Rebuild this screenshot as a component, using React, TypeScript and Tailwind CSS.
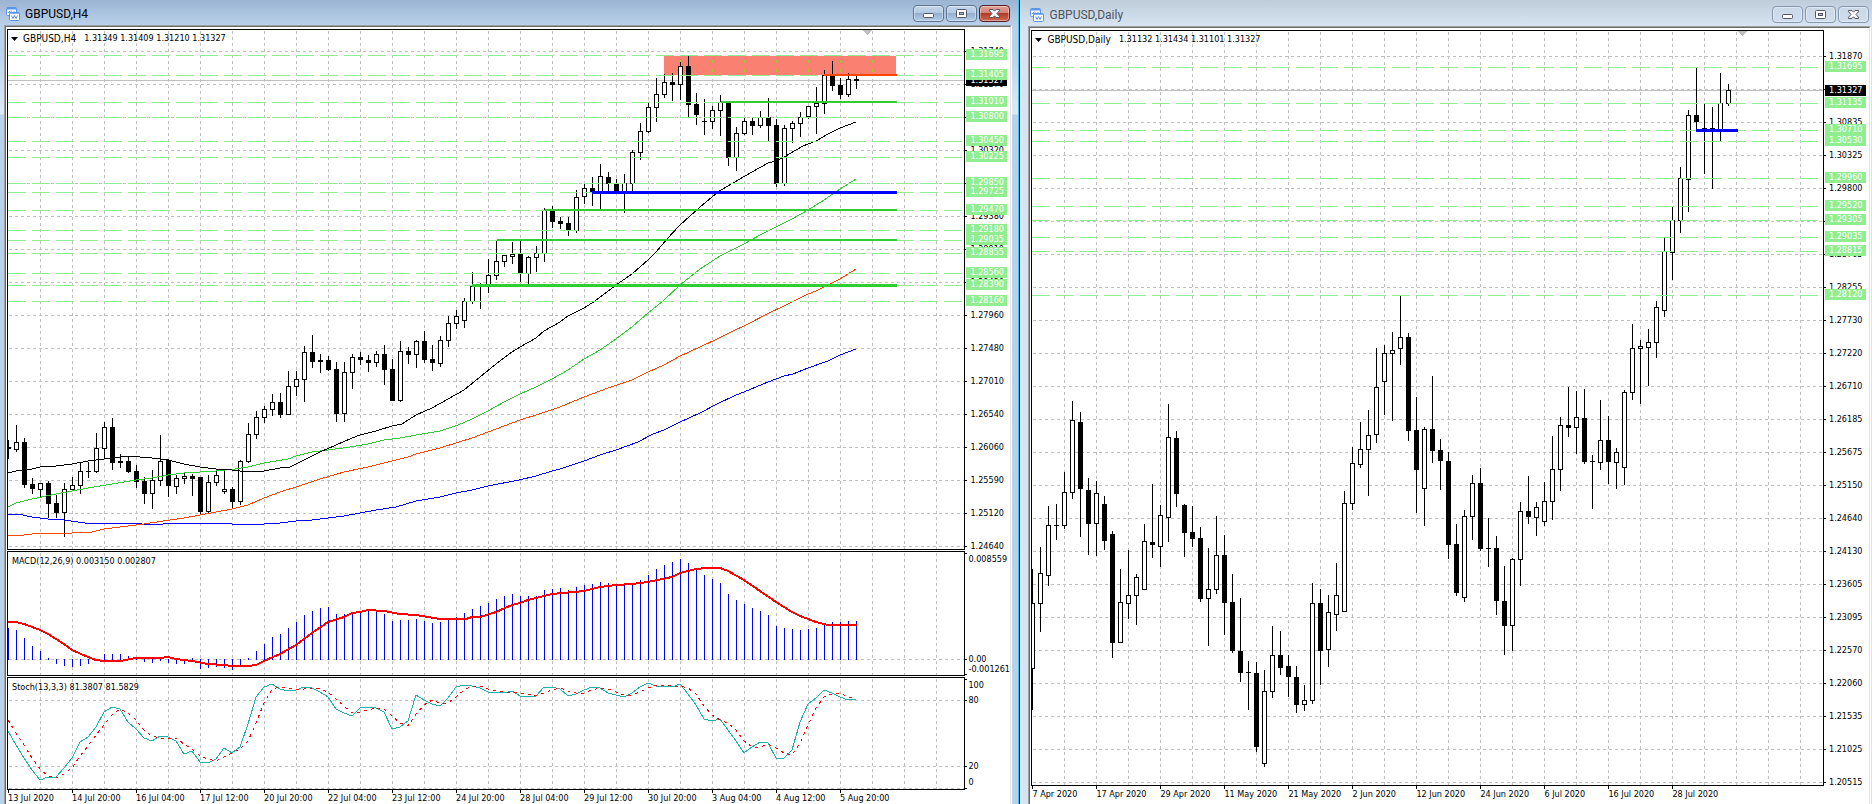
import type { ReactNode } from 'react';

// [high, body top, body bottom, low, 1 = bearish (filled)]
type Candle = [number, number, number, number, number];
type Level = { label: string; y: number };
type Origin = { x: number; y: number };

const H4: Candle[] = [
	[440, 447, 449, 459, 1], [425, 442, 450, 452, 0], [438, 442, 485, 488, 1], [478, 484, 489, 494, 1],
	[483, 483, 490, 497, 0], [481, 483, 504, 518, 1], [495, 503, 513, 518, 1], [483, 489, 513, 537, 0],
	[477, 485, 490, 491, 0], [462, 471, 486, 494, 0], [462, 471, 472, 478, 1], [433, 448, 472, 473, 0],
	[422, 427, 449, 459, 0], [418, 427, 463, 470, 1], [454, 461, 463, 468, 1], [456, 461, 472, 473, 1],
	[465, 471, 482, 488, 1], [477, 481, 494, 504, 1], [470, 480, 494, 509, 0], [435, 461, 481, 486, 0],
	[459, 460, 486, 497, 1], [475, 478, 487, 494, 0], [472, 476, 479, 484, 0], [474, 476, 479, 496, 1],
	[477, 477, 512, 515, 1], [475, 482, 512, 513, 0], [471, 475, 483, 486, 0], [471, 489, 492, 494, 0],
	[487, 489, 502, 509, 1], [460, 461, 502, 505, 0], [423, 434, 462, 463, 0], [411, 417, 435, 439, 0],
	[406, 409, 418, 423, 0], [394, 402, 410, 416, 0], [393, 402, 415, 418, 1], [371, 386, 415, 415, 0],
	[371, 379, 387, 396, 0], [346, 352, 380, 402, 0], [335, 352, 362, 368, 1], [354, 360, 362, 373, 1],
	[356, 360, 370, 371, 1], [362, 369, 414, 422, 1], [362, 372, 414, 422, 0], [354, 357, 373, 389, 0],
	[352, 357, 360, 365, 1], [355, 360, 363, 372, 1], [351, 354, 363, 367, 0], [345, 354, 370, 385, 1],
	[359, 369, 401, 401, 1], [341, 351, 401, 402, 0], [347, 351, 355, 364, 1], [340, 341, 355, 368, 0],
	[331, 341, 360, 363, 1], [345, 359, 363, 371, 1], [336, 340, 364, 367, 0], [316, 323, 341, 347, 0],
	[310, 316, 324, 329, 0], [298, 301, 321, 328, 0], [272, 286, 302, 304, 0], [283, 285, 286, 309, 1],
	[259, 275, 286, 293, 0], [240, 261, 276, 280, 0], [255, 255, 262, 267, 0], [242, 254, 257, 264, 0],
	[240, 253, 274, 282, 1], [256, 257, 274, 284, 0], [246, 253, 258, 272, 0], [208, 210, 254, 262, 0],
	[206, 210, 222, 228, 1], [217, 221, 224, 229, 1], [217, 223, 231, 236, 1], [190, 197, 231, 233, 0],
	[183, 188, 197, 204, 0], [177, 188, 193, 206, 1], [164, 176, 192, 209, 0], [172, 177, 184, 192, 1],
	[179, 183, 193, 193, 1], [174, 183, 192, 213, 0], [150, 152, 184, 192, 0], [123, 131, 153, 160, 0],
	[103, 107, 132, 133, 0], [78, 94, 108, 122, 0], [74, 82, 95, 98, 0], [73, 82, 85, 101, 1],
	[62, 66, 85, 100, 0], [56, 66, 105, 117, 1], [93, 104, 115, 125, 1], [99, 121, 122, 135, 1],
	[106, 110, 122, 129, 0], [95, 102, 111, 136, 0], [102, 102, 158, 166, 1], [127, 133, 158, 171, 0],
	[118, 121, 134, 135, 0], [118, 121, 126, 135, 1], [111, 117, 126, 128, 0], [98, 117, 126, 141, 1],
	[119, 125, 184, 187, 1], [125, 128, 184, 186, 0], [121, 123, 129, 143, 0], [112, 117, 124, 137, 0],
	[106, 106, 117, 119, 0], [87, 103, 107, 134, 0], [70, 75, 104, 114, 0], [61, 75, 86, 91, 1],
	[78, 85, 95, 99, 1], [73, 79, 95, 97, 0], [76, 79, 81, 89, 1],
];

const DAILY: Candle[] = [
	[569, 603, 669, 710, 0], [547, 573, 604, 632, 0], [506, 525, 576, 586, 0], [504, 525, 526, 540, 1],
	[472, 492, 526, 529, 0], [401, 420, 493, 499, 0], [412, 422, 489, 537, 1], [478, 490, 524, 555, 1],
	[481, 493, 524, 556, 0], [496, 504, 541, 550, 1], [531, 534, 643, 658, 1], [569, 602, 643, 643, 0],
	[550, 595, 604, 619, 0], [574, 577, 596, 625, 0], [524, 541, 590, 590, 0], [484, 542, 545, 558, 1],
	[505, 515, 547, 567, 0], [404, 437, 518, 542, 0], [431, 438, 494, 507, 1], [504, 505, 533, 557, 1],
	[506, 532, 539, 547, 1], [527, 538, 599, 602, 1], [548, 589, 599, 646, 0], [516, 555, 590, 594, 0],
	[535, 555, 603, 635, 1], [574, 602, 651, 653, 1], [598, 651, 673, 682, 1], [661, 672, 673, 710, 1],
	[662, 673, 747, 752, 1], [670, 691, 764, 767, 0], [626, 655, 692, 698, 0], [631, 655, 668, 675, 1],
	[655, 666, 677, 697, 1], [666, 677, 705, 713, 1], [685, 700, 705, 711, 0], [583, 603, 701, 704, 0],
	[589, 603, 651, 685, 1], [595, 612, 650, 667, 0], [563, 595, 615, 631, 0], [491, 503, 612, 612, 0],
	[447, 463, 504, 510, 0], [422, 449, 465, 468, 0], [410, 435, 450, 496, 0], [348, 387, 435, 443, 0],
	[345, 353, 382, 415, 0], [332, 350, 354, 421, 0], [296, 337, 349, 365, 0], [333, 337, 431, 441, 1],
	[397, 430, 470, 513, 1], [427, 429, 489, 526, 0], [376, 429, 451, 463, 1], [439, 450, 461, 490, 1],
	[452, 461, 545, 559, 1], [524, 544, 593, 596, 1], [510, 516, 598, 602, 0], [475, 483, 517, 540, 0],
	[468, 483, 549, 551, 1], [518, 548, 549, 567, 1], [536, 548, 601, 615, 1], [566, 601, 626, 655, 1],
	[558, 559, 626, 651, 0], [502, 511, 560, 586, 0], [476, 511, 517, 524, 1], [502, 507, 518, 536, 0],
	[482, 501, 522, 526, 0], [436, 469, 502, 520, 0], [417, 425, 470, 491, 0], [387, 425, 428, 437, 1],
	[391, 417, 428, 454, 0], [389, 418, 462, 464, 1], [455, 461, 462, 509, 1], [400, 440, 463, 470, 0],
	[416, 440, 462, 484, 1], [448, 452, 463, 489, 0], [390, 392, 468, 485, 0], [324, 348, 393, 400, 0],
	[340, 346, 349, 404, 0], [329, 342, 348, 386, 0], [301, 307, 343, 358, 0], [238, 251, 311, 317, 0],
	[207, 220, 253, 280, 0], [167, 178, 221, 233, 0], [110, 115, 180, 212, 0], [68, 115, 122, 130, 1],
	[104, 128, 130, 174, 1], [107, 128, 130, 189, 1], [73, 103, 131, 141, 0], [84, 90, 104, 106, 0],
];

const AVERAGES = [
	{
		color: '#0000ff',
		points:
			'8,514 18,514 32,517 48,519 64,520 85,523 136,523 142,524 163,524 165,523 228,523 232,524 248,525 264,524 280,523 296,521 312,520 328,518 344,516 360,513 376,510 396,507 416,501 440,497 456,493 472,490 488,486 519,480 536,476 552,471 560,469 584,461 600,455 616,450 638,442 653,434 664,430 680,422 700,413 717,404 736,395 744,392 768,382 784,376 793,374 808,368 828,361 840,355 856,349',
	},
	{
		color: '#ff4500',
		points:
			'8,536 24,535 40,533 72,533 92,532 104,529 128,526 144,524 163,521 184,518 200,515 216,512 232,509 248,505 264,498 280,492 296,487 320,479 344,472 368,467 392,461 408,457 416,454 440,448 456,443 472,438 488,432 520,420 536,415 560,407 584,397 608,388 632,380 648,372 664,365 680,356 700,347 717,339 731,332 748,324 767,314 784,306 808,294 816,291 840,279 856,269',
	},
	{
		color: '#32cd32',
		points:
			'8,507 16,503 32,499 56,494 88,488 112,484 136,480 152,478 168,475 184,473 200,472 216,471 235,469 248,467 264,463 288,459 296,456 312,452 328,450 350,447 368,444 384,440 400,438 416,435 440,431 458,425 472,419 488,411 504,402 520,394 536,387 552,379 568,370 584,359 600,350 616,339 632,327 648,313 663,301 680,285 700,269 720,256 744,244 760,235 776,227 792,219 808,210 824,200 840,189 856,179',
	},
	{
		color: '#000000',
		points:
			'8,473 16,471 32,469 40,467 56,466 72,464 88,461 104,459 128,456 140,457 152,458 168,460 184,464 200,467 216,469 232,470 240,471 264,471 280,468 290,467 304,460 320,452 336,445 352,438 360,435 376,431 392,426 402,424 416,415 432,408 448,399 464,390 480,377 496,364 512,352 520,347 536,338 544,331 560,322 568,316 584,308 595,301 616,285 632,274 648,260 656,252 667,239 680,225 700,207 718,192 733,183 752,172 768,163 776,161 784,157 803,146 816,141 828,134 840,128 856,122',
	},
];

const MACD = [
	628, 630, 638, 646, 651, 658, 663, 665, 666, 665, 663, 660, 654, 654, 654, 656, 658, 661, 662, 660, 662, 663, 663,
	658, 668, 667, 666, 667, 669, 666, 658, 651, 644, 637, 634, 628, 622, 615, 611, 608, 607, 614, 614, 614, 612, 611,
	611, 614, 621, 620, 620, 619, 621, 623, 622, 619, 617, 613, 609, 606, 603, 599, 596, 594, 596, 596, 596, 590, 589,
	588, 590, 587, 585, 584, 582, 583, 585, 585, 584, 580, 575, 569, 565, 562, 559, 563, 569, 575, 579, 583, 594, 600,
	604, 608, 611, 615, 626, 628, 629, 630, 629, 628, 624, 622, 622, 621, 621,
];
const MACD_ZERO = 659;
const MACD_SIGNAL =
	'8,622 16,622 24,624 40,630 48,634 64,644 72,650 88,657 96,660 104,661 120,661 136,658 160,658 168,657 176,659 192,661 208,664 224,665 232,666 248,666 256,665 264,661 280,654 296,645 312,633 328,622 344,617 352,613 360,612 368,610 384,611 400,614 416,615 440,619 466,619 472,617 480,617 496,612 512,605 520,603 528,600 552,594 584,591 600,587 616,585 632,584 648,582 672,577 680,573 696,569 706,568 720,568 728,571 744,580 760,591 776,602 792,612 800,616 808,619 816,622 828,625 857,625';

// the first two values only feed the moving average of the signal line
const STOCH = [
	707, 722, 731, 745, 758, 770, 780, 777, 777, 768, 758, 742, 737, 727, 712, 707, 709, 722, 729, 738, 741, 736, 737,
	741, 754, 751, 762, 763, 759, 748, 753, 747, 724, 697, 687, 684, 689, 691, 690, 687, 688, 692, 697, 709, 713, 716,
	708, 707, 708, 712, 729, 727, 721, 695, 700, 704, 706, 698, 687, 685, 686, 688, 692, 692, 693, 691, 696, 696, 696,
	687, 687, 689, 696, 694, 690, 687, 688, 693, 695, 697, 693, 687, 683, 686, 686, 687, 684, 694, 705, 719, 721, 719,
	730, 741, 753, 747, 742, 743, 758, 758, 750, 722, 704, 698, 690, 693, 697, 700, 699,
];
const stochMain = STOCH.slice(2).map((y, i) => `${8 + i * 8},${y}`).join(' ');
const stochSignal = STOCH.slice(2)
	.map((y, i) => `${8 + i * 8},${Math.round((y + STOCH[i] + STOCH[i + 1]) / 3)}`)
	.join(' ');

const H4_LEVELS: Level[] = [
	{ label: '1.31695', y: 55 },
	{ label: '1.31405', y: 75 },
	{ label: '1.31010', y: 102 },
	{ label: '1.30800', y: 117 },
	{ label: '1.30450', y: 141 },
	{ label: '1.30225', y: 157 },
	{ label: '1.29850', y: 183 },
	{ label: '1.29725', y: 192 },
	{ label: '1.29470', y: 210 },
	{ label: '1.29180', y: 230 },
	{ label: '1.29035', y: 240 },
	{ label: '1.28855', y: 253 },
	{ label: '1.28560', y: 273 },
	{ label: '1.28390', y: 285 },
	{ label: '1.28160', y: 301 },
];

const DAILY_LEVELS: Level[] = [
	{ label: '1.31695', y: 67 },
	{ label: '1.31135', y: 103 },
	{ label: '1.30710', y: 130 },
	{ label: '1.30530', y: 141 },
	{ label: '1.29960', y: 178 },
	{ label: '1.29520', y: 206 },
	{ label: '1.29305', y: 220 },
	{ label: '1.29035', y: 237 },
	{ label: '1.28815', y: 251 },
	{ label: '1.28120', y: 295 },
];

const H4_PRICES = [
	'1.31740', '1.31270', '1.30800', '1.30320', '1.29850', '1.29380', '1.28910', '1.28430',
	'1.27960', '1.27480', '1.27010', '1.26540', '1.26060', '1.25590', '1.25120', '1.24640',
];

const DAILY_PRICES = [
	'1.31870', '1.31345', '1.30835', '1.30325', '1.29800', '1.29290', '1.28765', '1.28255',
	'1.27730', '1.27220', '1.26710', '1.26185', '1.25675', '1.25150', '1.24640', '1.24130',
	'1.23605', '1.23095', '1.22570', '1.22060', '1.21535', '1.21025', '1.20515',
];

const H4_DATES = [
	'13 Jul 2020', '14 Jul 20:00', '16 Jul 04:00', '17 Jul 12:00', '20 Jul 20:00', '22 Jul 04:00', '23 Jul 12:00',
	'24 Jul 20:00', '28 Jul 04:00', '29 Jul 12:00', '30 Jul 20:00', '3 Aug 04:00', '4 Aug 12:00', '5 Aug 20:00',
];

const DAILY_DATES = [
	'7 Apr 2020', '17 Apr 2020', '29 Apr 2020', '11 May 2020', '21 May 2020', '2 Jun 2020',
	'12 Jun 2020', '24 Jun 2020', '6 Jul 2020', '16 Jul 2020', '28 Jul 2020',
];

const TREND_LINES = [
	{ x: 721, y: 101, h: 2, color: '#32cd32' },
	{ x: 545, y: 209, h: 2, color: '#32cd32' },
	{ x: 497, y: 239, h: 2, color: '#32cd32' },
	{ x: 472, y: 284, h: 3, color: '#32cd32' },
	{ x: 592, y: 191, h: 3, color: '#0000ff' },
	{ x: 824, y: 74, h: 2, color: '#ff4500' },
];

function Grid({ rows }: { rows: number[] }) {
	return (
		<g stroke="#c0c0c0" strokeDasharray="3 3">
			{Array.from({ length: 60 }, (_, i) => (
				<line key={i} x1={32.5 + i * 32} x2={32.5 + i * 32} y1="1" y2="100%" />
			))}
			{rows.map((y) => (
				<line key={y} x1="1" x2="100%" y1={y + 0.5} y2={y + 0.5} />
			))}
		</g>
	);
}

function Candles({ data, x0 }: { data: Candle[]; x0: number }) {
	return (
		<g stroke="#000">
			{data.map(([high, top, bottom, low, filled], i) => {
				const x = x0 + i * 8;
				return (
					<g key={i}>
						<line x1={x + 0.5} x2={x + 0.5} y1={high} y2={low} />
						{filled ? (
							<rect x={x - 2} y={top} width="5" height={bottom - top} fill="#000" stroke="none" />
						) : (
							<rect x={x - 1.5} y={top + 0.5} width="4" height={bottom - top - 1} fill="#fff" />
						)}
					</g>
				);
			})}
		</g>
	);
}

function Levels({ levels, origin }: { levels: Level[]; origin: Origin }) {
	return (
		<g stroke="#90ee90" strokeDasharray="18 6">
			{levels.map(({ label, y }) => (
				<line key={label} x1="0" x2="100%" y1={y - origin.y + 0.5} y2={y - origin.y + 0.5} />
			))}
		</g>
	);
}

function Plot({ children, caption }: { children: ReactNode; caption: ReactNode }) {
	return (
		<div className="relative min-w-0 flex-1 overflow-hidden border border-black">
			<svg className="absolute inset-0 h-full w-full" shapeRendering="crispEdges" aria-hidden="true">
				{children}
			</svg>
			{caption}
		</div>
	);
}

function ChartCaption({ symbol, quotes }: { symbol: string; quotes: string }) {
	return (
		<div className="absolute left-[3px] top-[3px] flex items-center leading-[11px]">
			<svg className="mr-[5px] h-1 w-[7px]" viewBox="0 0 7 4" aria-hidden="true">
				<path d="M0 0h7L3.5 4z" />
			</svg>
			<span className="mr-2 text-[10px]">{symbol}</span>
			<span>{quotes}</span>
		</div>
	);
}

function PriceScale({ prices, levels, bid, top, pad }: { prices: string[]; levels: Level[]; bid: number; top: number; pad: string }) {
	return (
		<div className={`relative w-[45px] shrink-0 ${pad}`}>
			<ul>
				{prices.map((p) => (
					<li key={p} className="flex h-[33px] items-center gap-[3px]">
						<span className="h-px w-0.5 bg-black" />
						{p}
					</li>
				))}
			</ul>
			<span
				className="absolute left-px h-[11px] w-[41px] bg-black pl-1 leading-[11px] text-white"
				style={{ top: bid - 5 - top }}>
				1.31327
			</span>
			{levels.map(({ label, y }) => (
				<span
					key={label}
					className="absolute left-px h-[11px] w-[41px] bg-[#90ee90] pl-1 leading-[11px] text-white"
					style={{ top: y - 6 - top }}>
					{label}
				</span>
			))}
		</div>
	);
}

function IndicatorScale({ marks, ticks, top }: { marks: Level[]; ticks: number[]; top: number }) {
	return (
		<div className="relative w-[45px] shrink-0">
			{ticks.map((y) => (
				<span key={y} className="absolute left-0 h-px w-0.5 bg-black" style={{ top: y - top }} />
			))}
			{marks.map(({ label, y }) => (
				<span key={label} className="absolute left-[3px] whitespace-nowrap leading-[11px]" style={{ top: y - 5 - top }}>
					{label}
				</span>
			))}
		</div>
	);
}

function TimeScale({ dates, height }: { dates: string[]; height: string }) {
	return (
		<ul className={`flex shrink-0 overflow-hidden pl-px ${height}`}>
			{dates.map((d) => (
				<li key={d} className="w-16 shrink-0 whitespace-nowrap leading-[11px]">
					<span className="block h-[3px] w-px bg-black" />
					{d}
				</li>
			))}
		</ul>
	);
}

function ChartIcon() {
	return (
		<svg className="h-[14px] w-[14px]" viewBox="0 0 14 14" fill="#fff" stroke="#5b93ea" aria-hidden="true">
			<rect x="0.5" y="0.5" width="10" height="8" rx="1" />
			<path d="M1 1.5h9" strokeWidth="2" />
			<path d="M2 5.5h1.5V4M5 6V3.5M7 5h2" fill="none" />
			<rect x="3.5" y="5.5" width="10" height="8" rx="1" />
			<path d="M4 6h9" strokeWidth="1.5" />
			<path d="M5.5 8.5l1.5 3 1.5-3 1.5 3 1.5-3" fill="none" />
		</svg>
	);
}

function TitleBar({ title, active }: { title: string; active: boolean }) {
	const button = active
		? 'border-[#5f7390] bg-[linear-gradient(to_bottom,#c3d6eb_0%,#b2cae4_45%,#94b0cf_50%,#b4cde8_100%)]'
		: 'border-[#8496b0] bg-[linear-gradient(to_bottom,#cbd8e6,#cfdded)]';
	const close = active
		? 'border-[#5a1f26] bg-[linear-gradient(to_bottom,#e0a093_0%,#d28578_45%,#b53a25_50%,#cf6a50_100%)]'
		: 'border-[#8496b0] bg-[linear-gradient(to_bottom,#cbd8e6,#cfdded)]';
	const base = 'flex h-[17px] w-[31px] items-center justify-center rounded-sm border shadow-[inset_0_0_0_1px_rgba(255,255,255,0.4)]';
	return (
		<header
			className={`flex shrink-0 items-center font-[Roboto,sans-serif] text-xs ${
				active
					? 'h-[25px] bg-[linear-gradient(to_bottom,#9ab4d2,#b9d1ea)] pl-1.5 pr-2 pt-0.5 text-black'
					: 'h-[26px] bg-[linear-gradient(to_bottom,#bfcddb,#d7e4f2)] pl-[10px] pr-[3px] pt-[3px] text-[#4c5560]'
			}`}>
			<ChartIcon />
			<h2 className="ml-[5px] flex-1">{title}</h2>
			<div className="flex gap-0.5">
				<button type="button" aria-label={`Minimize ${title}`} className={`${base} ${button}`}>
					<svg width="13" height="11" viewBox="0 0 13 11" aria-hidden="true">
						<rect x="1.5" y="5.5" width="10" height="4" rx="1" fill="#fff" stroke="#535666" />
					</svg>
				</button>
				<button type="button" aria-label={`Maximize ${title}`} className={`${base} ${button}`}>
					<svg width="13" height="11" viewBox="0 0 13 11" aria-hidden="true">
						<rect x="1.5" y="1.5" width="10" height="8" rx="1" fill="#fff" stroke="#535666" />
						<rect x="4.5" y="4.5" width="4" height="2" fill="#a9c0dc" stroke="#535666" />
					</svg>
				</button>
				<button type="button" aria-label={`Close ${title}`} className={`${base} ${close}`}>
					<svg width="13" height="11" viewBox="0 0 13 11" aria-hidden="true">
						<path
							d="M1.500 1.500h3.500l1.500 1.700 1.500-1.700h3.500v1.200L9 5.500l2.500 2.800v1.200H8L6.500 7.800 5 9.500H1.500V8.300L4 5.500 1.500 2.700z"
							fill="#fff"
							stroke="#535666"
						/>
					</svg>
				</button>
			</div>
		</header>
	);
}

function WindowBody({ children, margin }: { children: ReactNode; margin: string }) {
	return (
		<div className={`flex min-h-0 flex-1 flex-col border-l border-r border-t border-l-[#a0a0a0] border-r-white border-t-[#a0a0a0] ${margin}`}>
			<div className="flex min-h-0 flex-1 flex-col border-l border-r border-t border-l-[#696969] border-r-[#e3e3e3] border-t-[#696969] bg-white pl-px pt-0.5">
				{children}
			</div>
		</div>
	);
}

function H4Window() {
	const main = { x: 8, y: 30 };
	return (
		<section
			aria-label="GBPUSD,H4"
			className="flex min-w-0 flex-[1020] flex-col border-r border-black bg-[linear-gradient(to_bottom,#b9d1ea_25px,#b9d1ea_50px,#dfeaf7_114px,#b9d1ea_115px)]">
			<div className="flex min-h-0 flex-1 flex-col border-r border-[#35c5ec]">
				<TitleBar title="GBPUSD,H4" active />
				<WindowBody margin="ml-1 mr-1.5">
					<div className="flex min-h-0 flex-1 flex-col gap-px">
						<div className="flex min-h-0 flex-1">
							<Plot
								caption={<ChartCaption symbol="GBPUSD,H4" quotes="1.31349 1.31409 1.31210 1.31327" />}>
								<Grid rows={H4_PRICES.map((_, i) => 21 + i * 33)} />
								<line x1="0" x2="100%" y1="50.5" y2="50.5" stroke="#c0c0c0" />
								<g transform={`translate(${-main.x} ${-main.y})`}>
									<rect x="664" y="56" width="232" height="19" fill="#fa8072" />
									<g stroke="#9acd32" strokeDasharray="3 6">
										{[680, 712, 744, 776, 808, 840, 872].map((x) => (
											<line key={x} x1={x + 0.5} x2={x + 0.5} y1="60" y2="74" />
										))}
									</g>
									<Candles data={H4} x0={8} />
									<g fill="none">
										{AVERAGES.map((a) => (
											<polyline key={a.color} points={a.points} stroke={a.color} />
										))}
									</g>
								</g>
								<Levels levels={H4_LEVELS} origin={main} />
								<g transform={`translate(${-main.x} ${-main.y})`}>
									{TREND_LINES.map((t) => (
										<rect key={t.y} x={t.x} y={t.y} width={897 - t.x} height={t.h} fill={t.color} />
									))}
									<path d="M862 30h10l-5 5z" fill="#c0c0c0" />
								</g>
							</Plot>
							<PriceScale prices={H4_PRICES} levels={H4_LEVELS} bid={80} top={29} pad="pt-[6px]" />
						</div>

						<div className="flex h-[125px] shrink-0">
							<Plot
								caption={
									<p className="absolute left-1 top-1 leading-[11px]">MACD(12,26,9) 0.003150 0.002807</p>
								}>
								<Grid rows={[107]} />
								<g transform="translate(-8 -552)">
									<g fill="#0000ff">
										{MACD.map((y, i) => (
											<rect
												key={i}
												x={8 + i * 8}
												y={Math.min(y, MACD_ZERO)}
												width="1"
												height={Math.abs(y - MACD_ZERO) + 1}
											/>
										))}
									</g>
									<polyline points={MACD_SIGNAL} fill="none" stroke="#ff0000" strokeWidth="2" />
								</g>
							</Plot>
							<IndicatorScale
								top={551}
								ticks={[553, 659, 674]}
								marks={[
									{ label: '0.008559', y: 559 },
									{ label: '0.00', y: 659 },
									{ label: '-0.001261', y: 669 },
								]}
							/>
						</div>

						<div className="flex h-[113px] shrink-0">
							<Plot
								caption={<p className="absolute left-1 top-1 leading-[11px]">Stoch(13,3,3) 81.3807 81.5829</p>}>
								<Grid rows={[22, 88, 110]} />
								<g transform="translate(-8 -678)" fill="none">
									<polyline points={stochMain} stroke="#20b2aa" />
									<polyline points={stochSignal} stroke="#ff0000" strokeDasharray="3 4" />
								</g>
							</Plot>
							<IndicatorScale
								top={677}
								ticks={[679, 700, 766, 788]}
								marks={[
									{ label: '100', y: 685 },
									{ label: '80', y: 700 },
									{ label: '20', y: 766 },
									{ label: '0', y: 782 },
								]}
							/>
						</div>
					</div>
					<TimeScale dates={H4_DATES} height="h-[14px]" />
				</WindowBody>
			</div>
		</section>
	);
}

function DailyWindow() {
	const main = { x: 1032, y: 31 };
	return (
		<section aria-label="GBPUSD,Daily" className="flex min-w-0 flex-[852] flex-col bg-[#d7e4f2]">
			<TitleBar title="GBPUSD,Daily" active={false} />
			<WindowBody margin="ml-2 mr-px">
				<div className="flex min-h-0 flex-1">
					<Plot
						caption={<ChartCaption symbol="GBPUSD,Daily" quotes="1.31132 1.31434 1.31101 1.31327" />}>
						<Grid rows={DAILY_PRICES.map((_, i) => 25 + i * 33)} />
						<line x1="0" x2="100%" y1="59.5" y2="59.5" stroke="#c0c0c0" />
						<g transform={`translate(${-main.x} ${-main.y})`}>
							<Candles data={DAILY} x0={1032} />
						</g>
						<Levels levels={DAILY_LEVELS} origin={main} />
						<g transform={`translate(${-main.x} ${-main.y})`}>
							<rect x="1696" y="129" width="42" height="3" fill="#0000ff" />
							<path d="M1737 31h10l-5 5z" fill="#c0c0c0" />
						</g>
					</Plot>
					<PriceScale prices={DAILY_PRICES} levels={DAILY_LEVELS} bid={90} top={30} pad="pt-[10px]" />
				</div>
				<TimeScale dates={DAILY_DATES} height="h-[18px]" />
			</WindowBody>
		</section>
	);
}

export default function App() {
	return (
		<main className="flex h-screen min-h-[640px] w-full overflow-hidden bg-white font-['DejaVu_Sans_Condensed','DejaVu_Sans',sans-serif] text-[9px] text-black">
			<H4Window />
			<DailyWindow />
		</main>
	);
}
